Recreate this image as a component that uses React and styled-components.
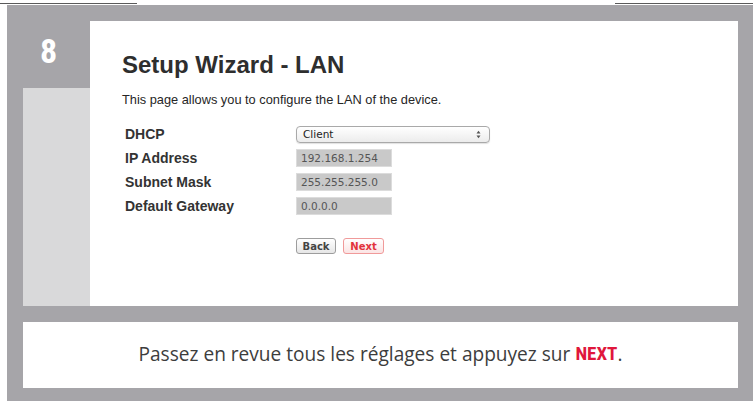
import React from 'react';
import styled, { createGlobalStyle } from 'styled-components';

const GlobalStyle = createGlobalStyle`
   html, body {
      margin: 0;
      padding: 0;
      background: #ffffff;
      width: 753px;
      height: 401px;
      overflow: hidden;
   }
   * { box-sizing: border-box; }
`

const Page = styled.div`
   width: 753px;
   height: 401px;
   display: flex;
   flex-direction: column;
`

const TopStrip = styled.div`
   height: 5px;
   display: flex;
   justify-content: space-between;
   align-items: flex-end;
   padding-bottom: 1px;
`

const TopLine = styled.div`
   width: ${p => p.$w}px;
   height: 1px;
   background: #5a5a5a;
`

const Frame = styled.div`
   flex: 1;
   margin-left: 7px;
   background: #a6a5a9;
   padding: 16px 15px 13px 16px;
   display: flex;
   flex-direction: column;
   gap: 16px;
`

const Card = styled.div`
   height: 285px;
   display: grid;
   grid-template-columns: 67px 1fr;
   grid-template-rows: 67px 1fr;
`

const StepCell = styled.div`
   margin-left: -16px;
   display: flex;
   align-items: center;
   justify-content: center;
   padding-bottom: 7px;
   color: #ffffff;
   font-family: "Liberation Sans Narrow", "Roboto Condensed", Roboto, sans-serif;
   font-weight: 700;
   font-size: 34px;
   line-height: 1;
`

const SideCell = styled.div`
   background: #d9d9da;
`

const Content = styled.div`
   grid-column: 2;
   grid-row: 1 / span 2;
   background: #ffffff;
   padding: 30px 0 0 32px;
   font-family: "Liberation Sans", Arial, sans-serif;
`

const Title = styled.h1`
   margin: 0;
   font-size: 24px;
   line-height: 27px;
   font-weight: 700;
   color: #2e2e2e;
`

const Intro = styled.p`
   margin: 14px 0 0 0;
   font-size: 12.8px;
   line-height: 15px;
   color: #262626;
`

const Form = styled.div`
   margin: 15px 0 0 3px;
   display: grid;
   grid-template-columns: 171px auto;
   grid-auto-rows: 24px;
   align-items: center;
   justify-items: start;
`

const Label = styled.div`
   font-size: 14px;
   font-weight: 700;
   color: #333333;
`

const SelectBox = styled.div`
   width: 194px;
   height: 17px;
   border: 1px solid #a9a9a9;
   border-radius: 4px;
   background: linear-gradient(#ffffff, #ececec);
   display: flex;
   align-items: center;
   justify-content: space-between;
   padding: 0 8px 0 6px;
   font-family: "DejaVu Sans", sans-serif;
   font-size: 10.5px;
   color: #222;
   box-shadow: 0 1px 1px rgba(0,0,0,0.12);
`

const Field = styled.div`
   width: 96px;
   height: 18px;
   background: #c9c9c9;
   border: 1px solid #dcdcdc;
   display: flex;
   align-items: center;
   padding-left: 4px;
   font-family: "DejaVu Sans", sans-serif;
   font-size: 10.5px;
   color: #555555;
`

const Buttons = styled.div`
   margin: 20px 0 0 174px;
   display: flex;
   gap: 7px;
`

const Button = styled.div`
   height: 16px;
   width: ${p => p.$w}px;
   border-radius: 3px;
   border: 1px solid ${p => p.$primary ? '#f09a9a' : '#9d9d9d'};
   background: linear-gradient(#ffffff, ${p => p.$primary ? '#fbe4e4' : '#e6e6e6'});
   color: ${p => p.$primary ? '#e2333c' : '#444444'};
   font-family: "DejaVu Sans", sans-serif;
   font-size: 10px;
   font-weight: 700;
   display: flex;
   align-items: center;
   justify-content: center;
`

const Note = styled.div`
   flex: 1;
   background: #ffffff;
   display: flex;
   align-items: center;
   justify-content: center;
   padding-bottom: 3px;
   font-family: "Open Sans", sans-serif;
   font-size: 19.1px;
   color: #3d3d3d;
`

const Strong = styled.span`
   font-family: "Liberation Sans Narrow", "Roboto Condensed", Roboto, sans-serif;
   font-weight: 700;
   color: #e0173c;
   margin-left: 5px;
`

const Arrows = () => (
   <svg width="5" height="9" viewBox="0 0 5 9">
      <path d="M0.5 3.5 L2.5 0.8 L4.5 3.5 Z" fill="#555" />
      <path d="M0.5 5.5 L2.5 8.2 L4.5 5.5 Z" fill="#555" />
   </svg>
)

const rows = [
   { label: 'IP Address', value: '192.168.1.254' },
   { label: 'Subnet Mask', value: '255.255.255.0' },
   { label: 'Default Gateway', value: '0.0.0.0' },
]

const App = () => {
   return (
      <Page>
         <GlobalStyle />
         <TopStrip>
            <TopLine $w={137} />
            <TopLine $w={138} />
         </TopStrip>
         <Frame>
            <Card>
               <StepCell>8</StepCell>
               <SideCell />
               <Content>
                  <Title>Setup Wizard - LAN</Title>
                  <Intro>This page allows you to configure the LAN of the device.</Intro>
                  <Form>
                     <Label>DHCP</Label>
                     <SelectBox>
                        <span>Client</span>
                        <Arrows />
                     </SelectBox>
                     {rows.map(r => (
                        <React.Fragment key={r.label}>
                           <Label>{r.label}</Label>
                           <Field>{r.value}</Field>
                        </React.Fragment>
                     ))}
                  </Form>
                  <Buttons>
                     <Button $w={40}>Back</Button>
                     <Button $w={41} $primary>Next</Button>
                  </Buttons>
               </Content>
            </Card>
            <Note>
               Passez en revue tous les réglages et appuyez sur<Strong>NEXT</Strong>.
            </Note>
         </Frame>
      </Page>
   );
}

export default App;
